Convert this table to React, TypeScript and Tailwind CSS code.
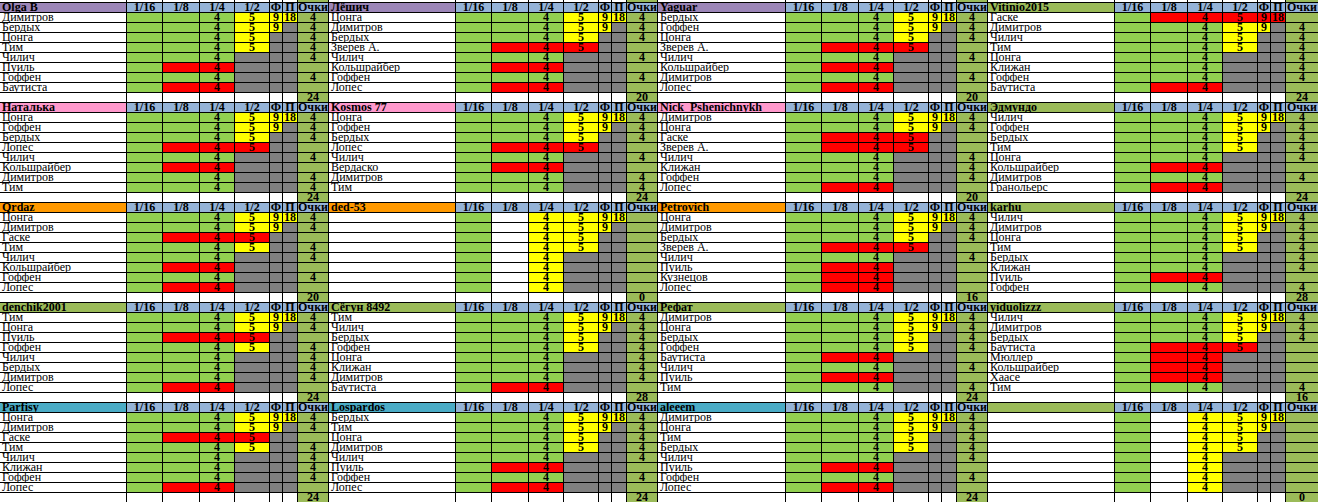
import React from "react";

const G = "bg-[#92d050]";
const O = "bg-[#9bbb59]";
const Y = "bg-[#ffff00]";
const R = "bg-[#ff0000]";
const X = "bg-[#808080]";
const Wh = "bg-white";
const H = "bg-[#95b3d7]";

const PURPLE = "bg-[#9c86b8]";
const PINK = "bg-[#ff99cc]";
const ORANGE = "bg-[#ff9900]";
const GREEN = "bg-[#9bbb59]";
const TEAL = "bg-[#4bacc6]";

type Pat = [string, string][];

const P: Record<string, Pat> = {
  W: [[G, ""], [G, ""], [G, "4"], [Y, "5"], [Y, "9"], [Y, "18"], [O, "4"]],
  F: [[G, ""], [G, ""], [G, "4"], [Y, "5"], [Y, "9"], [X, ""], [O, "4"]],
  S: [[G, ""], [G, ""], [G, "4"], [Y, "5"], [X, ""], [X, ""], [O, "4"]],
  Q: [[G, ""], [G, ""], [G, "4"], [X, ""], [X, ""], [X, ""], [O, "4"]],
  L: [[G, ""], [R, ""], [R, "4"], [X, ""], [X, ""], [X, ""], [O, ""]],
  M: [[G, ""], [R, ""], [R, "4"], [R, "5"], [X, ""], [X, ""], [O, ""]],
  Z: [[G, ""], [R, ""], [R, "4"], [R, "5"], [R, "9"], [R, "18"], [O, ""]],
  w: [[G, ""], [Wh, ""], [Y, "4"], [Y, "5"], [Y, "9"], [Y, "18"], [O, ""]],
  f: [[G, ""], [Wh, ""], [Y, "4"], [Y, "5"], [Y, "9"], [X, ""], [O, ""]],
  s: [[G, ""], [Wh, ""], [Y, "4"], [Y, "5"], [X, ""], [X, ""], [O, ""]],
  q: [[G, ""], [Wh, ""], [Y, "4"], [X, ""], [X, ""], [X, ""], [O, ""]],
};

type Block = { name: string; hdr: string; rows: [string, string][]; total: string };

const B = (name: string, hdr: string, rows: string, total: string): Block => ({
  name,
  hdr,
  rows: rows.split("|").map((r) => {
    const [n, t] = r.split(":");
    return [n, t] as [string, string];
  }),
  total,
});

const BLANK = ":w|:f|:s|:s|:q|:q|:q|:q";

const data: Block[][] = [
  [
    B("Olga B", PURPLE, "Димитров:W|Бердых:F|Цонга:S|Тим:S|Чилич:Q|Пуиль:L|Гоффен:Q|Баутиста:L", "24"),
    B("Лёшич", PURPLE, "Цонга:W|Димитров:F|Бердых:S|Зверев А.:M|Чилич:Q|Кольшрайбер:L|Гоффен:Q|Лопес:L", "20"),
    B("Yaguar", PURPLE, "Бердых:W|Гоффен:F|Цонга:S|Зверев А.:M|Чилич:Q|Кольшрайбер:L|Димитров:Q|Лопес:L", "20"),
    B("Vitinio2015", GREEN, "Гаске:Z|Димитров:F|Чилич:S|Тим:S|Цонга:Q|Клижан:Q|Гоффен:Q|Баутиста:L", "24"),
  ],
  [
    B("Наталька", PINK, "Цонга:W|Гоффен:F|Бердых:S|Лопес:M|Чилич:Q|Кольшрайбер:L|Димитров:Q|Тим:Q", "24"),
    B("Kosmos 77", PINK, "Цонга:W|Гоффен:F|Бердых:S|Лопес:M|Чилич:Q|Вердаско:L|Димитров:Q|Тим:Q", "24"),
    B("Nick_Pshenichnykh", PINK, "Димитров:W|Цонга:F|Гаске:M|Зверев А.:M|Чилич:Q|Клижан:Q|Гоффен:Q|Лопес:L", "20"),
    B("Эдмундо", GREEN, "Чилич:W|Гоффен:F|Бердых:S|Тим:S|Цонга:Q|Кольшрайбер:L|Димитров:Q|Гранольерс:L", "24"),
  ],
  [
    B("Qrdaz", ORANGE, "Цонга:W|Димитров:F|Гаске:M|Тим:S|Чилич:Q|Кольшрайбер:L|Гоффен:Q|Лопес:L", "20"),
    B("ded-53", ORANGE, BLANK, "0"),
    B("Petrovich", ORANGE, "Цонга:W|Димитров:F|Бердых:S|Зверев А.:M|Чилич:Q|Пуиль:L|Кузнецов:L|Лопес:L", "16"),
    B("karhu", GREEN, "Чилич:W|Димитров:F|Цонга:S|Тим:S|Бердых:Q|Клижан:Q|Пуиль:L|Гоффен:Q", "28"),
  ],
  [
    B("denchik2001", GREEN, "Тим:W|Цонга:F|Пуиль:M|Гоффен:S|Чилич:Q|Бердых:Q|Димитров:Q|Лопес:L", "24"),
    B("Сёгун 8492", GREEN, "Тим:W|Чилич:F|Бердых:S|Гоффен:S|Цонга:Q|Клижан:Q|Димитров:Q|Баутиста:L", "28"),
    B("Рефат", GREEN, "Димитров:W|Цонга:F|Бердых:S|Гоффен:S|Баутиста:L|Чилич:Q|Пуиль:L|Тим:Q", "24"),
    B("yiduolizzz", GREEN, "Чилич:W|Димитров:F|Бердых:S|Баутиста:M|Мюллер:L|Кольшрайбер:L|Хаасе:L|Тим:Q", "16"),
  ],
  [
    B("Parfisy", TEAL, "Цонга:W|Димитров:F|Гаске:M|Тим:S|Чилич:Q|Клижан:Q|Гоффен:Q|Лопес:L", "24"),
    B("Lospardos", TEAL, "Бердых:W|Тим:F|Цонга:S|Димитров:S|Чилич:Q|Пуиль:L|Гоффен:Q|Лопес:L", "24"),
    B("aleeem", TEAL, "Димитров:W|Цонга:F|Тим:S|Бердых:S|Чилич:Q|Пуиль:L|Гоффен:Q|Лопес:L", "24"),
    B("", GREEN, BLANK, "0"),
  ],
];

const HEADS = ["1/16", "1/8", "1/4", "1/2", "Ф", "П", "Очки"];

const base = "overflow-hidden whitespace-nowrap text-[12px] leading-[8px] text-black";

function Cell({ bg, text, kind }: { bg: string; text?: string; kind: "name" | "hname" | "num" }) {
  const k =
    kind === "name"
      ? "pl-[2px] text-left"
      : kind === "hname"
      ? "pl-[2px] text-left font-bold"
      : "text-center font-bold";
  return <div className={`${base} ${bg} ${k}`}>{text}</div>;
}

function blockLine(b: Block, line: number, key: string) {
  const cells: React.ReactNode[] = [];
  if (line === 0) {
    cells.push(<Cell key={key + "n"} bg={b.hdr} text={b.name} kind="hname" />);
    HEADS.forEach((h, i) => cells.push(<Cell key={key + i} bg={H} text={h} kind="num" />));
  } else if (line === 9) {
    for (let i = 0; i < 7; i++) cells.push(<Cell key={key + i} bg={Wh} kind="num" />);
    cells.push(<Cell key={key + "t"} bg={O} text={b.total} kind="num" />);
  } else {
    const [n, t] = b.rows[line - 1];
    cells.push(<Cell key={key + "n"} bg={Wh} text={n} kind="name" />);
    P[t].forEach(([bg, tx], i) => cells.push(<Cell key={key + i} bg={bg} text={tx} kind="num" />));
  }
  return cells;
}

export default function App() {
  const cells: React.ReactNode[] = [];
  for (let i = 0; i < 32; i++) {
    cells.push(<div key={"top" + i} className={i % 8 === 7 ? O : Wh} />);
  }
  data.forEach((row, r) => {
    for (let line = 0; line < 10; line++) {
      row.forEach((b, c) => {
        cells.push(...blockLine(b, line, `${r}-${line}-${c}-`));
      });
    }
  });
  return (
    <div
      className="w-[1318px] h-[502px] overflow-hidden bg-black grid gap-px grid-rows-[2px] auto-rows-[9px] grid-cols-[126px_35px_36px_34px_34px_12px_14px_30px_126px_35px_36px_34px_34px_12px_14px_30px_127px_35px_36px_34px_34px_12px_14px_30px_126px_35px_36px_34px_34px_12px_14px_1fr]"
      style={{ fontFamily: '"Liberation Serif", "Times New Roman", serif' }}
    >
      {cells}
    </div>
  );
}
